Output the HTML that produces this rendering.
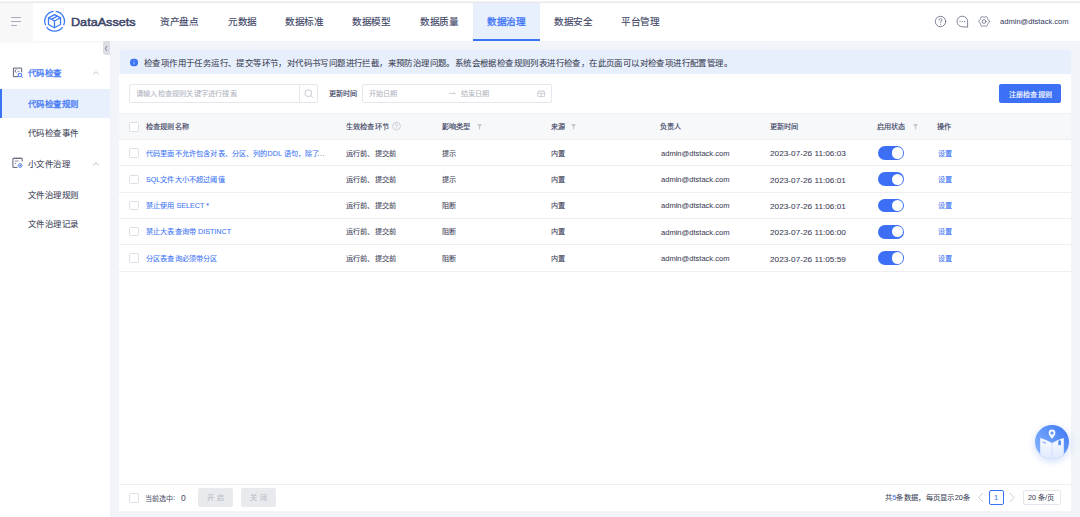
<!DOCTYPE html>
<html lang="zh-CN"><head><meta charset="utf-8">
<style>
*{margin:0;padding:0;box-sizing:border-box}
html,body{width:1080px;height:517px;overflow:hidden;background:#f1f4f8;font-family:"Liberation Sans",sans-serif;color:#3d4257}
.a{position:absolute}
.t{position:absolute;white-space:nowrap;line-height:1;transform-origin:0 0}
.cb{position:absolute;width:9.4px;height:9.4px;border:1px solid #dcdfe6;border-radius:1.5px;background:#fff}
.sw{position:absolute;width:26.3px;height:13.5px;border-radius:7px;background:#3c6ff5}
.sw:after{content:"";position:absolute;right:1.1px;top:1.1px;width:11.3px;height:11.3px;border-radius:50%;background:#fff}

</style></head><body>
<div class="a" style="left:0;top:0;width:1080px;height:3.2px;background:linear-gradient(#fff 0,#fff 1.2px,#e9e9e9 1.8px,#e9e9e9 2.8px,#fff 3.2px)"></div>
<div class="a" style="left:0;top:3px;width:1080px;height:37.65px;background:#fff"></div>
<div class="a" style="left:0;top:3px;width:33px;height:37.65px;background:#f8f8f9"></div>
<div class="a" style="left:0;top:40.65px;width:1080px;height:4.5px;background:linear-gradient(#eff2f6,#f3f5f8 45%,rgba(243,245,248,0))"></div>
<div class="a" style="left:11px;top:17.4px;width:10px;height:1.1px;background:#a6abbb;border-radius:1px"></div>
<div class="a" style="left:11px;top:20.8px;width:10px;height:1.1px;background:#a6abbb;border-radius:1px"></div>
<div class="a" style="left:11px;top:24.8px;width:6.4px;height:1.1px;background:#a6abbb;border-radius:1px"></div>
<svg class="a" style="left:43px;top:10px" width="23" height="23" viewBox="0 0 23 23">
<g fill="none" stroke="#3d7bf6" stroke-width="1.3" stroke-linejoin="round">
<path d="M12.63 1.45 A9.85 9.85 0 0 1 20.6 15.26"/>
<path d="M19.57 17.04 A9.85 9.85 0 0 1 3.63 17.04"/>
<path d="M2.6 15.26 A9.85 9.85 0 0 1 10.57 1.45"/>
<path d="M11.5 4.7 L17.5 7.8 L17.5 14.5 L11.5 17.7 L5.5 14.5 L5.5 7.8 Z" stroke-linecap="round"/>
<path d="M5.5 7.8 L11.5 11 L17.5 7.8 M11.5 11 V17.7" stroke-linecap="round"/>
<path d="M8.4 9.3 L14.4 6.2" stroke-linecap="round"/>
</g></svg>
<div class="t" style="left:71.20px;top:15.80px;font-size:20px;transform:scale(0.6317,0.5850);color:#3c4468;font-weight:400;-webkit-text-stroke:0.85px #3c4468;">DataAssets</div>
<div class="a" style="left:473px;top:3px;width:67px;height:37.65px;background:#e8effd"></div>
<div class="a" style="left:473px;top:38.8px;width:67px;height:2px;background:#3b73f5"></div>
<div class="t" style="left:160.41px;top:17.39px;font-size:20px;transform:scale(0.4800);color:#3d4466;font-weight:400;-webkit-text-stroke:0.25px #3d4466;">资产盘点</div>
<div class="t" style="left:227.71px;top:17.39px;font-size:20px;transform:scale(0.4800);color:#3d4466;font-weight:400;-webkit-text-stroke:0.25px #3d4466;">元数据</div>
<div class="t" style="left:285.21px;top:17.39px;font-size:20px;transform:scale(0.4800);color:#3d4466;font-weight:400;-webkit-text-stroke:0.25px #3d4466;">数据标准</div>
<div class="t" style="left:352.21px;top:17.39px;font-size:20px;transform:scale(0.4800);color:#3d4466;font-weight:400;-webkit-text-stroke:0.25px #3d4466;">数据模型</div>
<div class="t" style="left:419.71px;top:17.39px;font-size:20px;transform:scale(0.4800);color:#3d4466;font-weight:400;-webkit-text-stroke:0.25px #3d4466;">数据质量</div>
<div class="t" style="left:554.21px;top:17.39px;font-size:20px;transform:scale(0.4800);color:#3d4466;font-weight:400;-webkit-text-stroke:0.25px #3d4466;">数据安全</div>
<div class="t" style="left:621.21px;top:17.39px;font-size:20px;transform:scale(0.4800);color:#3d4466;font-weight:400;-webkit-text-stroke:0.25px #3d4466;">平台管理</div>
<div class="t" style="left:487.41px;top:17.09px;font-size:20px;transform:scale(0.4800);color:#3b73f5;font-weight:400;-webkit-text-stroke:0.6px #3b73f5;">数据治理</div>
<div class="t" style="left:999.70px;top:17.77px;font-size:20px;transform:scale(0.3780,0.3800);color:#3d4466;font-weight:400;-webkit-text-stroke:0.15px #3d4466;">admin@dtstack.com</div>
<svg class="a" style="left:933px;top:14px" width="60" height="15" viewBox="0 0 60 15">
<g fill="none" stroke="#6a6f88" stroke-width="0.85" stroke-linecap="round" stroke-linejoin="round">
<circle cx="7.5" cy="7.5" r="5.2"/>
<path d="M6 6.1 C6 5.2 6.7 4.6 7.5 4.6 C8.3 4.6 9 5.2 9 6 C9 7 7.6 7.1 7.6 8.2 V8.6"/>
<path d="M29.3 12.8 A5.3 5.3 0 1 1 34.6 7.5 V12.8 Z"/>
<path d="M56.45 7.50 L56.36 7.96 L56.10 8.38 L55.74 8.74 L55.35 9.05 L55.02 9.33 L54.78 9.62 L54.64 9.98 L54.57 10.41 L54.49 10.89 L54.36 11.39 L54.13 11.82 L53.77 12.13 L53.33 12.28 L52.84 12.27 L52.34 12.14 L51.89 11.96 L51.48 11.81 L51.10 11.75 L50.72 11.81 L50.31 11.96 L49.86 12.14 L49.36 12.27 L48.87 12.28 L48.43 12.13 L48.07 11.82 L47.84 11.39 L47.71 10.89 L47.63 10.41 L47.56 9.98 L47.42 9.63 L47.18 9.33 L46.85 9.05 L46.46 8.74 L46.10 8.38 L45.84 7.96 L45.75 7.50 L45.84 7.04 L46.10 6.62 L46.46 6.26 L46.85 5.95 L47.18 5.67 L47.42 5.38 L47.56 5.02 L47.63 4.59 L47.71 4.11 L47.84 3.61 L48.07 3.18 L48.42 2.87 L48.87 2.72 L49.36 2.73 L49.86 2.86 L50.31 3.04 L50.72 3.19 L51.10 3.25 L51.48 3.19 L51.89 3.04 L52.34 2.86 L52.84 2.73 L53.33 2.72 L53.77 2.87 L54.13 3.18 L54.36 3.61 L54.49 4.11 L54.57 4.59 L54.64 5.02 L54.78 5.38 L55.02 5.67 L55.35 5.95 L55.74 6.26 L56.10 6.62 L56.36 7.04 Z"/>
<circle cx="51.1" cy="7.5" r="1.9"/>
</g>
<circle cx="7.6" cy="10.2" r="0.5" fill="#6a6f88"/>
<circle cx="27" cy="7.5" r="0.6" fill="#6a6f88"/><circle cx="29.3" cy="7.5" r="0.6" fill="#6a6f88"/><circle cx="31.6" cy="7.5" r="0.6" fill="#6a6f88"/>
</svg>
<div class="a" style="left:0;top:40.65px;width:110px;height:476.35px;background:#fff"></div>
<div class="a" style="left:0;top:40.65px;width:110px;height:3px;background:linear-gradient(#f3f5f8,rgba(243,245,248,0))"></div>
<div class="a" style="left:103px;top:41.2px;width:7px;height:14px;background:#dcdee5;border-radius:2px 0 0 3px"></div>
<svg class="a" style="left:103px;top:41px" width="7" height="14" viewBox="0 0 7 14"><path d="M3.7 5.3 L2.4 7.4 L3.7 9.5" fill="none" stroke="#6f7489" stroke-width="0.9" stroke-linecap="round" stroke-linejoin="round"/></svg>
<svg class="a" style="left:92px;top:69.6px" width="8" height="6" viewBox="0 0 8 6"><path d="M1.6 4 L4 1.7 L6.4 4" fill="none" stroke="#b3b6c2" stroke-width="0.9" stroke-linecap="round" stroke-linejoin="round"/></svg>
<svg class="a" style="left:92px;top:160.6px" width="8" height="6" viewBox="0 0 8 6"><path d="M1.6 4 L4 1.7 L6.4 4" fill="none" stroke="#b3b6c2" stroke-width="0.9" stroke-linecap="round" stroke-linejoin="round"/></svg>
<svg class="a" style="left:11px;top:65.5px" width="14" height="14" viewBox="0 0 14 14">
<path d="M7.2 10.7 H2.4 V2.1 H10.7 V6.2" fill="none" stroke="#5d6277" stroke-width="1"/>
<path d="M5.1 3.7 L3.9 5.1 L5.1 6.5" fill="none" stroke="#5d6277" stroke-width="1" stroke-linecap="round" stroke-linejoin="round"/>
<path d="M6.3 5.3 H8.7" stroke="#9da1b3" stroke-width="1.1"/>
<circle cx="8.9" cy="9" r="1.8" fill="none" stroke="#4b7ff6" stroke-width="1.1"/>
<path d="M10.2 10.3 L11.5 11.6" stroke="#4b7ff6" stroke-width="1" stroke-linecap="round"/>
</svg>
<svg class="a" style="left:11px;top:155px" width="14" height="14" viewBox="0 0 14 14">
<path d="M6.5 12.4 H1.9 V3.4 H11.2 V6.3" fill="none" stroke="#5d6277" stroke-width="1"/>
<path d="M3.8 2.4 V3.6 M5.8 2.4 V3.6 M7.8 2.4 V3.6 M9.6 2.4 V3.6" stroke="#5d6277" stroke-width="0.9"/>
<path d="M3.8 6 H7.6 M3.8 8.4 H5.2" stroke="#7d8196" stroke-width="0.9"/>
<path d="M7.2 10.5 L8.2 8.8 H10.2 L11.2 10.5 L10.2 12.2 H8.2 Z" fill="none" stroke="#4b7ff6" stroke-width="1" stroke-linejoin="round"/>
<circle cx="9.2" cy="10.5" r="0.7" fill="#4a4f66"/>
</svg>
<div class="a" style="left:0;top:89px;width:110px;height:28.7px;background:#e8effd"></div>
<div class="a" style="left:0;top:89px;width:2px;height:28.7px;background:#3b73f5"></div>
<div class="t" style="left:28.15px;top:68.80px;font-size:20px;transform:scale(0.4200);color:#3b73f5;font-weight:400;-webkit-text-stroke:0.6px #3b73f5;">代码检查</div>
<div class="t" style="left:28.15px;top:100.15px;font-size:20px;transform:scale(0.4200);color:#3b73f5;font-weight:400;-webkit-text-stroke:0.6px #3b73f5;">代码检查规则</div>
<div class="t" style="left:28.15px;top:128.80px;font-size:20px;transform:scale(0.4200);color:#3d4257;font-weight:400;-webkit-text-stroke:0.18px #3d4257;">代码检查事件</div>
<div class="t" style="left:28.15px;top:159.75px;font-size:20px;transform:scale(0.4200);color:#3d4257;font-weight:400;-webkit-text-stroke:0.18px #3d4257;">小文件治理</div>
<div class="t" style="left:28.15px;top:190.85px;font-size:20px;transform:scale(0.4200);color:#3d4257;font-weight:400;-webkit-text-stroke:0.18px #3d4257;">文件治理规则</div>
<div class="t" style="left:28.15px;top:219.80px;font-size:20px;transform:scale(0.4200);color:#3d4257;font-weight:400;-webkit-text-stroke:0.18px #3d4257;">文件治理记录</div>
<div class="a" style="left:120px;top:50px;width:951px;height:24px;background:#e8effc;border-radius:2px 2px 0 0"></div>
<svg class="a" style="left:130px;top:58px;transform:translateY(0.45px)" width="8" height="8" viewBox="0 0 8 8"><circle cx="4" cy="4" r="4" fill="#3b73f5"/><rect x="3.5" y="3.5" width="1" height="2.6" fill="#fff" fill-opacity="0.6"/><rect x="3.5" y="2" width="1" height="0.9" fill="#fff" fill-opacity="0.6"/></svg>
<div class="t" style="left:144.15px;top:59.00px;font-size:20px;transform:scale(0.4200);color:#3a3f55;font-weight:400;-webkit-text-stroke:0.18px #3a3f55;">检查项作用于任务运行、提交等环节，对代码书写问题进行拦截，来预防治理问题。系统会根据检查规则列表进行检查，在此页面可以对检查项进行配置管理。</div>
<div class="a" style="left:119px;top:74px;width:952px;height:437px;background:#fff"></div>
<div class="a" style="left:129px;top:84px;width:189px;height:19px;border:1px solid #e5e7ed;border-radius:2px"></div>
<div class="a" style="left:299px;top:84.2px;width:1px;height:18.7px;background:#e5e7ed"></div>
<div class="t" style="left:136.38px;top:90.02px;font-size:20px;transform:scale(0.3600);color:#b3b6c3;font-weight:400;-webkit-text-stroke:0.18px #b3b6c3;">请输入检查规则关键字进行搜索</div>
<div class="t" style="left:328.79px;top:90.34px;font-size:20px;transform:scale(0.3575);color:#3b4262;font-weight:400;-webkit-text-stroke:0.42px #3b4262;">更新时间</div>
<div class="a" style="left:362.3px;top:84.2px;width:189.4px;height:18.7px;border:1px solid #e5e7ed;border-radius:2px"></div>
<div class="t" style="left:369.49px;top:90.14px;font-size:20px;transform:scale(0.3575);color:#b3b6c3;font-weight:400;-webkit-text-stroke:0.18px #b3b6c3;">开始日期</div>
<svg class="a" style="left:302px;top:87px" width="14" height="14" viewBox="0 0 14 14"><circle cx="6.3" cy="6.2" r="3.4" fill="none" stroke="#c0c3ce" stroke-width="0.9"/><path d="M8.8 8.7 L10.4 10.3" stroke="#c0c3ce" stroke-width="0.9" stroke-linecap="round"/></svg>
<svg class="a" style="left:448px;top:90px" width="9" height="7" viewBox="0 0 9 7"><path d="M1.4 3.6 H7.2 M5.6 2.4 L7.2 3.6" fill="none" stroke="#c0c3ce" stroke-width="0.8" stroke-linecap="round"/></svg>
<svg class="a" style="left:536px;top:89px" width="10" height="9" viewBox="0 0 10 9"><rect x="1.9" y="2.2" width="6.8" height="5.4" rx="0.6" fill="none" stroke="#c0c3ce" stroke-width="0.8"/><path d="M1.9 4.3 H8.7 M5.3 4.3 V7.6" stroke="#c0c3ce" stroke-width="0.8"/><path d="M3.6 1.4 V2.6 M7 1.4 V2.6" stroke="#c0c3ce" stroke-width="0.8"/></svg>
<div class="t" style="left:461.49px;top:90.14px;font-size:20px;transform:scale(0.3575);color:#b3b6c3;font-weight:400;-webkit-text-stroke:0.18px #b3b6c3;">结束日期</div>
<div class="a" style="left:999px;top:84.3px;width:62px;height:19px;background:#3c70f5;border-radius:2px"></div>
<div class="t" style="left:1008.69px;top:90.55px;font-size:20px;transform:scale(0.3565);color:#fff;font-weight:400;-webkit-text-stroke:0.4px #fff;">注册检查规则</div>
<div class="a" style="left:119px;top:113px;width:952px;height:26.3px;background:#f7f8fa"></div>
<div class="a" style="left:119px;top:113px;width:952px;height:1px;background:#eff0f3"></div>
<div class="a" style="left:119px;top:139.00px;width:952px;height:1px;background:#eceef2"></div>
<div class="a" style="left:119px;top:165.30px;width:952px;height:1px;background:#eceef2"></div>
<div class="a" style="left:119px;top:191.60px;width:952px;height:1px;background:#eceef2"></div>
<div class="a" style="left:119px;top:217.90px;width:952px;height:1px;background:#eceef2"></div>
<div class="a" style="left:119px;top:244.20px;width:952px;height:1px;background:#eceef2"></div>
<div class="a" style="left:119px;top:270.50px;width:952px;height:1px;background:#eceef2"></div>
<div class="cb" style="left:129.3px;top:122.2px"></div>
<div class="t" style="left:145.99px;top:123.34px;font-size:20px;transform:scale(0.3575);color:#3b4262;font-weight:400;-webkit-text-stroke:0.42px #3b4262;">检查规则名称</div>
<div class="t" style="left:345.59px;top:123.34px;font-size:20px;transform:scale(0.3575);color:#3b4262;font-weight:400;-webkit-text-stroke:0.42px #3b4262;">生效检查环节</div>
<div class="t" style="left:441.89px;top:123.34px;font-size:20px;transform:scale(0.3575);color:#3b4262;font-weight:400;-webkit-text-stroke:0.42px #3b4262;">影响类型</div>
<div class="t" style="left:551.09px;top:123.34px;font-size:20px;transform:scale(0.3575);color:#3b4262;font-weight:400;-webkit-text-stroke:0.42px #3b4262;">来源</div>
<div class="t" style="left:660.19px;top:123.34px;font-size:20px;transform:scale(0.3575);color:#3b4262;font-weight:400;-webkit-text-stroke:0.42px #3b4262;">负责人</div>
<div class="t" style="left:769.59px;top:123.34px;font-size:20px;transform:scale(0.3575);color:#3b4262;font-weight:400;-webkit-text-stroke:0.42px #3b4262;">更新时间</div>
<div class="t" style="left:877.49px;top:123.34px;font-size:20px;transform:scale(0.3575);color:#3b4262;font-weight:400;-webkit-text-stroke:0.42px #3b4262;">启用状态</div>
<div class="t" style="left:937.49px;top:123.34px;font-size:20px;transform:scale(0.3575);color:#3b4262;font-weight:400;-webkit-text-stroke:0.42px #3b4262;">操作</div>
<svg class="a" style="left:391px;top:121px" width="11" height="11" viewBox="0 0 11 11"><circle cx="5.5" cy="5.1" r="3.9" fill="none" stroke="#bfc2cd" stroke-width="0.75"/><path d="M4.2 4.2 C4.2 3.4 4.8 2.9 5.5 2.9 C6.2 2.9 6.8 3.4 6.8 4.1 C6.8 4.9 5.6 5 5.6 5.9 V6.2" fill="none" stroke="#bfc2cd" stroke-width="0.8" stroke-linecap="round"/><circle cx="5.6" cy="7.4" r="0.45" fill="#bfc2cd"/></svg>
<svg class="a" style="left:476.7px;top:123.5px" width="6" height="6" viewBox="0 0 6 6"><path d="M0.2 0.3 H5 L3.1 2.6 V5.3 H2.1 V2.6 Z" fill="#bcbfcb"/></svg>
<svg class="a" style="left:571.4px;top:123.5px" width="6" height="6" viewBox="0 0 6 6"><path d="M0.2 0.3 H5 L3.1 2.6 V5.3 H2.1 V2.6 Z" fill="#bcbfcb"/></svg>
<svg class="a" style="left:912.9px;top:123.5px" width="6" height="6" viewBox="0 0 6 6"><path d="M0.2 0.3 H5 L3.1 2.6 V5.3 H2.1 V2.6 Z" fill="#bcbfcb"/></svg>
<div class="cb" style="left:129.3px;top:148.20px"></div>
<div class="t" style="left:146.19px;top:149.54px;font-size:20px;transform:scale(0.3575);color:#3b73f5;font-weight:400;-webkit-text-stroke:0.18px #3b73f5;">代码里面不允许包含对表、分区、列的DDL 语句，除了</div>
<div class="a" style="left:318.2px;top:154.50px;width:1px;height:1px;background:#9aa6c8;box-shadow:2.6px 0 #9aa6c8,5.2px 0 #9aa6c8"></div>
<div class="t" style="left:345.59px;top:149.54px;font-size:20px;transform:scale(0.3575);color:#3d4257;font-weight:400;-webkit-text-stroke:0.18px #3d4257;">运行前、提交前</div>
<div class="t" style="left:441.89px;top:149.54px;font-size:20px;transform:scale(0.3575);color:#3d4257;font-weight:400;-webkit-text-stroke:0.18px #3d4257;">提示</div>
<div class="t" style="left:551.09px;top:149.54px;font-size:20px;transform:scale(0.3575);color:#3d4257;font-weight:400;-webkit-text-stroke:0.18px #3d4257;">内置</div>
<div class="t" style="left:660.60px;top:149.61px;font-size:20px;transform:scale(0.3775,0.3775);color:#3d4257;font-weight:400;-webkit-text-stroke:0.15px #3d4257;">admin@dtstack.com</div>
<div class="t" style="left:770.20px;top:149.38px;font-size:20px;transform:scale(0.4120,0.3850);color:#3d4257;font-weight:400;-webkit-text-stroke:0.15px #3d4257;">2023-07-26 11:06:03</div>
<div class="sw" style="left:877.9px;top:146.15px"></div>
<div class="t" style="left:937.99px;top:149.54px;font-size:20px;transform:scale(0.3575);color:#3b73f5;font-weight:400;-webkit-text-stroke:0.18px #3b73f5;">设置</div>
<div class="cb" style="left:129.3px;top:174.50px"></div>
<div class="t" style="left:146.19px;top:175.84px;font-size:20px;transform:scale(0.3575);color:#3b73f5;font-weight:400;-webkit-text-stroke:0.18px #3b73f5;">SQL文件大小不超过阈值</div>
<div class="t" style="left:345.59px;top:175.84px;font-size:20px;transform:scale(0.3575);color:#3d4257;font-weight:400;-webkit-text-stroke:0.18px #3d4257;">运行前、提交前</div>
<div class="t" style="left:441.89px;top:175.84px;font-size:20px;transform:scale(0.3575);color:#3d4257;font-weight:400;-webkit-text-stroke:0.18px #3d4257;">提示</div>
<div class="t" style="left:551.09px;top:175.84px;font-size:20px;transform:scale(0.3575);color:#3d4257;font-weight:400;-webkit-text-stroke:0.18px #3d4257;">内置</div>
<div class="t" style="left:660.60px;top:175.91px;font-size:20px;transform:scale(0.3775,0.3775);color:#3d4257;font-weight:400;-webkit-text-stroke:0.15px #3d4257;">admin@dtstack.com</div>
<div class="t" style="left:770.20px;top:175.68px;font-size:20px;transform:scale(0.4120,0.3850);color:#3d4257;font-weight:400;-webkit-text-stroke:0.15px #3d4257;">2023-07-26 11:06:01</div>
<div class="sw" style="left:877.9px;top:172.45px"></div>
<div class="t" style="left:937.99px;top:175.84px;font-size:20px;transform:scale(0.3575);color:#3b73f5;font-weight:400;-webkit-text-stroke:0.18px #3b73f5;">设置</div>
<div class="cb" style="left:129.3px;top:200.80px"></div>
<div class="t" style="left:146.19px;top:202.14px;font-size:20px;transform:scale(0.3575);color:#3b73f5;font-weight:400;-webkit-text-stroke:0.18px #3b73f5;">禁止使用 SELECT *</div>
<div class="t" style="left:345.59px;top:202.14px;font-size:20px;transform:scale(0.3575);color:#3d4257;font-weight:400;-webkit-text-stroke:0.18px #3d4257;">运行前、提交前</div>
<div class="t" style="left:441.89px;top:202.14px;font-size:20px;transform:scale(0.3575);color:#3d4257;font-weight:400;-webkit-text-stroke:0.18px #3d4257;">阻断</div>
<div class="t" style="left:551.09px;top:202.14px;font-size:20px;transform:scale(0.3575);color:#3d4257;font-weight:400;-webkit-text-stroke:0.18px #3d4257;">内置</div>
<div class="t" style="left:660.60px;top:202.21px;font-size:20px;transform:scale(0.3775,0.3775);color:#3d4257;font-weight:400;-webkit-text-stroke:0.15px #3d4257;">admin@dtstack.com</div>
<div class="t" style="left:770.20px;top:201.98px;font-size:20px;transform:scale(0.4120,0.3850);color:#3d4257;font-weight:400;-webkit-text-stroke:0.15px #3d4257;">2023-07-26 11:06:01</div>
<div class="sw" style="left:877.9px;top:198.75px"></div>
<div class="t" style="left:937.99px;top:202.14px;font-size:20px;transform:scale(0.3575);color:#3b73f5;font-weight:400;-webkit-text-stroke:0.18px #3b73f5;">设置</div>
<div class="cb" style="left:129.3px;top:227.10px"></div>
<div class="t" style="left:146.19px;top:228.44px;font-size:20px;transform:scale(0.3575);color:#3b73f5;font-weight:400;-webkit-text-stroke:0.18px #3b73f5;">禁止大表查询带 DISTINCT</div>
<div class="t" style="left:345.59px;top:228.44px;font-size:20px;transform:scale(0.3575);color:#3d4257;font-weight:400;-webkit-text-stroke:0.18px #3d4257;">运行前、提交前</div>
<div class="t" style="left:441.89px;top:228.44px;font-size:20px;transform:scale(0.3575);color:#3d4257;font-weight:400;-webkit-text-stroke:0.18px #3d4257;">阻断</div>
<div class="t" style="left:551.09px;top:228.44px;font-size:20px;transform:scale(0.3575);color:#3d4257;font-weight:400;-webkit-text-stroke:0.18px #3d4257;">内置</div>
<div class="t" style="left:660.60px;top:228.51px;font-size:20px;transform:scale(0.3775,0.3775);color:#3d4257;font-weight:400;-webkit-text-stroke:0.15px #3d4257;">admin@dtstack.com</div>
<div class="t" style="left:770.20px;top:228.28px;font-size:20px;transform:scale(0.4120,0.3850);color:#3d4257;font-weight:400;-webkit-text-stroke:0.15px #3d4257;">2023-07-26 11:06:00</div>
<div class="sw" style="left:877.9px;top:225.05px"></div>
<div class="t" style="left:937.99px;top:228.44px;font-size:20px;transform:scale(0.3575);color:#3b73f5;font-weight:400;-webkit-text-stroke:0.18px #3b73f5;">设置</div>
<div class="cb" style="left:129.3px;top:253.40px"></div>
<div class="t" style="left:146.19px;top:254.74px;font-size:20px;transform:scale(0.3575);color:#3b73f5;font-weight:400;-webkit-text-stroke:0.18px #3b73f5;">分区表查询必须带分区</div>
<div class="t" style="left:345.59px;top:254.74px;font-size:20px;transform:scale(0.3575);color:#3d4257;font-weight:400;-webkit-text-stroke:0.18px #3d4257;">运行前、提交前</div>
<div class="t" style="left:441.89px;top:254.74px;font-size:20px;transform:scale(0.3575);color:#3d4257;font-weight:400;-webkit-text-stroke:0.18px #3d4257;">阻断</div>
<div class="t" style="left:551.09px;top:254.74px;font-size:20px;transform:scale(0.3575);color:#3d4257;font-weight:400;-webkit-text-stroke:0.18px #3d4257;">内置</div>
<div class="t" style="left:660.60px;top:254.81px;font-size:20px;transform:scale(0.3775,0.3775);color:#3d4257;font-weight:400;-webkit-text-stroke:0.15px #3d4257;">admin@dtstack.com</div>
<div class="t" style="left:770.20px;top:254.58px;font-size:20px;transform:scale(0.4120,0.3850);color:#3d4257;font-weight:400;-webkit-text-stroke:0.15px #3d4257;">2023-07-26 11:05:59</div>
<div class="sw" style="left:877.9px;top:251.35px"></div>
<div class="t" style="left:937.99px;top:254.74px;font-size:20px;transform:scale(0.3575);color:#3b73f5;font-weight:400;-webkit-text-stroke:0.18px #3b73f5;">设置</div>
<div class="a" style="left:119px;top:484px;width:952px;height:1px;background:#eceef2"></div>
<div class="cb" style="left:129.2px;top:493.3px"></div>
<div class="t" style="left:144.99px;top:494.61px;font-size:20px;transform:scale(0.3500);color:#50556c;font-weight:400;-webkit-text-stroke:0.18px #50556c;">当前选中</div>
<div class="t" style="left:173.30px;top:494.34px;font-size:20px;transform:scale(0.3700,0.3700);color:#4a4f66;font-weight:400;-webkit-text-stroke:0.15px #4a4f66;">:</div>
<div class="t" style="left:181.40px;top:493.79px;font-size:20px;transform:scale(0.4225,0.4200);color:#4a4f66;font-weight:400;-webkit-text-stroke:0.15px #4a4f66;">0</div>
<div class="a" style="left:198px;top:488.3px;width:35.3px;height:18.4px;background:#e9eaee;border-radius:2px"></div>
<div class="t" style="left:207.19px;top:494.44px;font-size:20px;transform:scale(0.3575);color:#b8bac5;font-weight:400;letter-spacing:1px;-webkit-text-stroke:0.2px #b8bac5;">开 启</div>
<div class="a" style="left:241px;top:488.3px;width:34.8px;height:18.4px;background:#e9eaee;border-radius:2px"></div>
<div class="t" style="left:249.99px;top:494.44px;font-size:20px;transform:scale(0.3575);color:#b8bac5;font-weight:400;letter-spacing:1px;-webkit-text-stroke:0.2px #b8bac5;">关 闭</div>
<div class="t" style="left:884.58px;top:493.97px;font-size:20px;transform:scale(0.3650);color:#3d4257;font-weight:400;-webkit-text-stroke:0.18px #3d4257;">共<span style="color:#3b73f5;-webkit-text-stroke-color:#3b73f5">5</span>条数据，每页显示20条</div>
<div class="a" style="left:989px;top:490px;width:14.8px;height:14.8px;border:1px solid #3b73f5;border-radius:2px"></div>
<div class="t" style="left:994.30px;top:494.34px;font-size:20px;transform:scale(0.3700,0.3700);color:#3b73f5;font-weight:400;-webkit-text-stroke:0.15px #3b73f5;">1</div>
<div class="a" style="left:1023px;top:490.3px;width:38.4px;height:14.5px;border:1px solid #e5e7ed;border-radius:2px"></div>
<svg class="a" style="left:976px;top:491px" width="40" height="13" viewBox="0 0 40 13"><path d="M6.8 2.2 L2.7 6.5 L6.8 10.8 M33.9 2.2 L38 6.5 L33.9 10.8" fill="none" stroke="#c3c6d0" stroke-width="0.9" stroke-linecap="round" stroke-linejoin="round"/></svg>
<div class="a" style="left:1034.9px;top:424.9px;width:33.8px;height:33.8px;border-radius:50%;background:linear-gradient(45deg,#8cb4fb,#6a9ef9 45%,#3a74f5);box-shadow:0 2px 8px rgba(70,120,240,0.28);overflow:hidden">
<svg width="34" height="34" viewBox="0 0 34 34" style="position:absolute;left:0;top:0">
<defs><linearGradient id="pg" x1="0" y1="0" x2="0" y2="1"><stop offset="0" stop-color="#fff" stop-opacity="0.95"/><stop offset="1" stop-color="#dfe9fd" stop-opacity="1"/></linearGradient></defs>
<path d="M5.2 13.1 Q11 14.6 17 17.9 Q23 14.6 28.8 13.1 V34 H5.2 Z" fill="url(#pg)"/>
<path d="M17 17.8 V34" stroke="#cddcfb" stroke-width="0.8"/>
<path d="M23.4 15.4 H25.9 V20.6 L24.65 19.7 L23.4 20.6 Z" fill="#4b86f6"/>
<path d="M7.6 16.9 L10.9 18.2" stroke="#4b86f6" stroke-width="0.8"/>
<path d="M17 13.8 C15 11.2 13.6 9.8 13.6 7.9 A3.4 3.4 0 0 1 20.4 7.9 C20.4 9.8 19 11.2 17 13.8 Z" fill="#fff" fill-opacity="0.92"/>
<circle cx="17" cy="7.9" r="1.5" fill="#5e95f8"/>
</svg></div>
<div class="t" style="left:1028.29px;top:494.04px;font-size:20px;transform:scale(0.3575);color:#3d4257;font-weight:400;-webkit-text-stroke:0.18px #3d4257;">20 条/页</div>
</body></html>
